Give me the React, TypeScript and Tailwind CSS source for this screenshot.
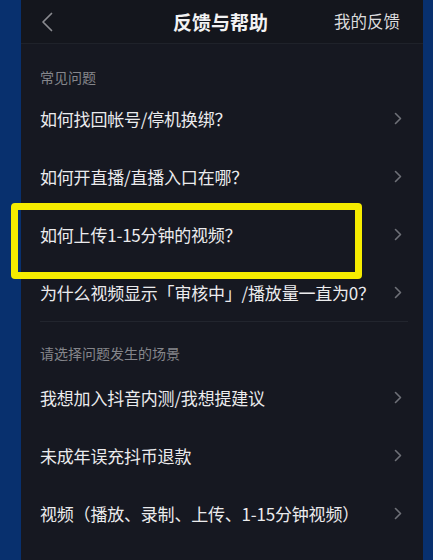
const faq = [
  "如何找回帐号/停机换绑？",
  "如何开直播/直播入口在哪？",
  "如何上传1-15分钟的视频？",
  "为什么视频显示「审核中」/播放量一直为0？",
];

const scenes = [
  "我想加入抖音内测/我想提建议",
  "未成年误充抖币退款",
  "视频（播放、录制、上传、1-15分钟视频）",
];

function Chevron() {
  return (
    <svg width="8" height="13" viewBox="0 0 8 13" fill="none" className="shrink-0">
      <path d="M1.5 1.5L6.5 6.5L1.5 11.5" stroke="#6e7077" strokeWidth="1.6" strokeLinecap="round" strokeLinejoin="round" />
    </svg>
  );
}

function Row({ text }: { text: string }) {
  return (
    <div className="flex h-[58px] items-center justify-between pl-[19px] pr-[21px]">
      <span className="text-[17px] leading-none tracking-[-0.2px] text-[#ebebed]">{text}</span>
      <Chevron />
    </div>
  );
}

export default function App() {
  return (
    <div
      className="relative flex h-[560px] w-[433px] overflow-hidden bg-[#08306e] pl-[21px] pr-[10px]"
      style={{ fontFamily: '"Noto Sans CJK SC", "Noto Sans", sans-serif' }}
    >
      <div className="flex flex-1 flex-col bg-[#161821]">
        <header className="grid h-[44px] grid-cols-[1fr_auto_1fr] items-center border-b border-[#1f222a] bg-[#14161d] pl-[20px] pr-[23px]">
          <svg width="12" height="20" viewBox="0 0 12 20" fill="none">
            <path d="M10.5 1.5L2 10L10.5 18.5" stroke="#8a8b90" strokeWidth="1.7" strokeLinecap="round" strokeLinejoin="round" />
          </svg>
          <h1 className="text-[19px] font-bold leading-none text-[#f2f2f3]">反馈与帮助</h1>
          <span className="justify-self-end text-[16.5px] leading-none text-[#dcdcde]">我的反馈</span>
        </header>

        <div className="pl-[19px] pt-[23px] pb-[2px] text-[14px] leading-[20px] text-[#85868b]">常见问题</div>
        {faq.map((t) => (
          <Row key={t} text={t} />
        ))}

        <div className="ml-[19px] mr-[15px] border-t border-[#22252e]" />

        <div className="pl-[19px] pt-[21px] pb-[5px] text-[14px] leading-[20px] text-[#85868b]">请选择问题发生的场景</div>
        {scenes.map((t) => (
          <Row key={t} text={t} />
        ))}
      </div>

      <div className="absolute left-[11px] top-[203px] h-[76px] w-[351px] rounded-[4px] border-[7px] border-[#f6ec00]" />
    </div>
  );
}
